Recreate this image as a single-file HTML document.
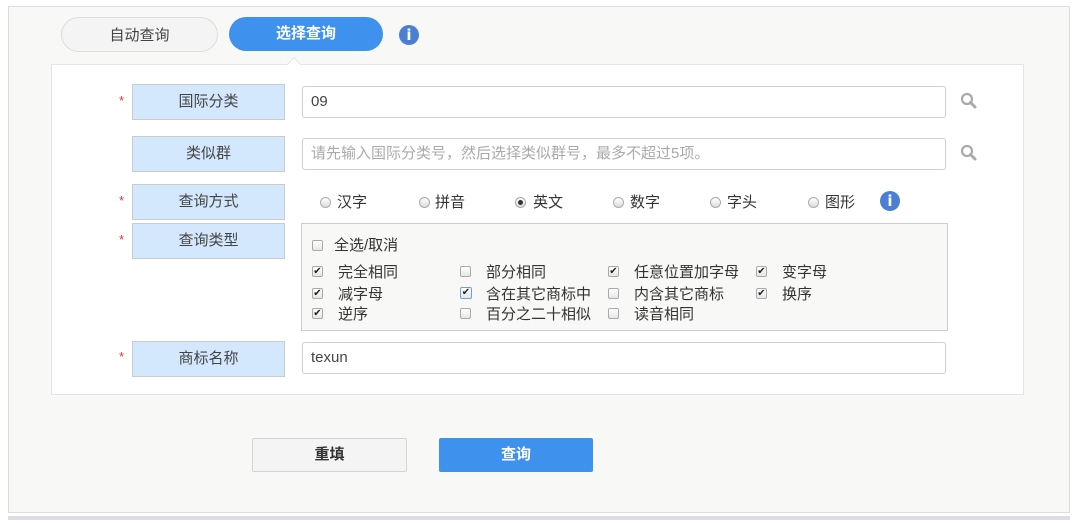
<!DOCTYPE html>
<html><head><meta charset="utf-8"><style>
*{margin:0;padding:0;box-sizing:border-box}
body{width:1080px;height:523px;background:#fff;position:relative;overflow:hidden;font-family:"Liberation Sans","Noto Sans CJK SC",sans-serif;font-size:15px;color:#333}
.a{position:absolute}
.outer{left:8px;top:6px;width:1062px;height:507px;background:#f8f8f6;border:1px solid #ddd}
.inner{left:51px;top:64px;width:973px;height:331px;background:#fff;border:1px solid #e4e4e4}
.tab{height:35px;border-radius:18px;text-align:center;line-height:35px;font-size:15px}
.lbl{left:132px;width:153px;height:36px;background:#d4e8fd;border:1px solid #c8ccd0;text-align:center;line-height:34px;color:#444}
.star{left:119px;color:#e33;font-size:13px}
.inp{left:302px;width:644px;height:32px;border:1px solid #d0d0d0;border-radius:3px;background:#fff;line-height:30px;padding-left:8px;color:#444}
.info{width:20px;height:20px;border-radius:50%;background:#4a7fd4;color:#fff;text-align:center;font:bold 15px/20px "DejaVu Sans",sans-serif}
.rad{width:11px;height:11px;border-radius:50%;border:1px solid #aaa;background:linear-gradient(#fff,#ddd)}
.rad.on::after{content:"";position:absolute;left:2px;top:2px;width:5px;height:5px;border-radius:50%;background:#333}
.cb{width:11px;height:11px;border:1px solid #aaa;border-radius:2px;background:linear-gradient(#fff,#e6e6e6);font-size:10px;line-height:9px;text-align:center;color:#222}
.t{font-size:15px;line-height:17px;color:#333}
</style></head><body>
<div class="a outer"></div>
<div class="a" style="left:8px;top:516px;width:1062px;height:4px;background:#dcdde8"></div>
<div class="a tab" style="left:61px;top:17px;width:157px;background:#f4f4f4;border:1px solid #ddd;color:#444">自动查询</div>
<div class="a tab" style="left:229px;top:17px;width:154px;height:34px;background:#3e92ee;color:#fff;font-weight:bold;line-height:34px">选择查询</div>
<div class="a info" style="left:399px;top:25px">i</div>
<div class="a inner"></div>
<div class="a" style="left:289px;top:59px;width:10px;height:10px;background:#fff;border-left:1px solid #e4e4e4;border-top:1px solid #e4e4e4;transform:rotate(45deg)"></div>

<div class="a star" style="top:93px">*</div>
<div class="a lbl" style="top:84px">国际分类</div>
<div class="a inp" style="top:86px">09</div>
<div class="a star" style="top:193px">*</div>
<div class="a lbl" style="top:136px">类似群</div>
<div class="a inp" style="top:138px;color:#aaa">请先输入国际分类号，然后选择类似群号，最多不超过5项。</div>
<div class="a lbl" style="top:184px">查询方式</div>
<div class="a star" style="top:232px">*</div>
<div class="a lbl" style="top:223px">查询类型</div>
<div class="a star" style="top:349px">*</div>
<div class="a lbl" style="top:341px">商标名称</div>
<div class="a inp" style="top:342px">texun</div>

<svg class="a" style="left:960px;top:92px" width="18" height="18"><circle cx="7" cy="7" r="5" fill="none" stroke="#aaa" stroke-width="2.2"/><line x1="10.5" y1="10.5" x2="15" y2="15" stroke="#aaa" stroke-width="3" stroke-linecap="round"/></svg>
<svg class="a" style="left:960px;top:144px" width="18" height="18"><circle cx="7" cy="7" r="5" fill="none" stroke="#aaa" stroke-width="2.2"/><line x1="10.5" y1="10.5" x2="15" y2="15" stroke="#aaa" stroke-width="3" stroke-linecap="round"/></svg>

<div class="a rad" style="left:320px;top:197px"></div><div class="a t" style="left:337px;top:194px">汉字</div>
<div class="a rad" style="left:419px;top:197px"></div><div class="a t" style="left:435px;top:194px">拼音</div>
<div class="a rad on" style="left:515px;top:197px"></div><div class="a t" style="left:533px;top:194px">英文</div>
<div class="a rad" style="left:613px;top:197px"></div><div class="a t" style="left:630px;top:194px">数字</div>
<div class="a rad" style="left:710px;top:197px"></div><div class="a t" style="left:727px;top:194px">字头</div>
<div class="a rad" style="left:808px;top:197px"></div><div class="a t" style="left:825px;top:194px">图形</div>
<div class="a info" style="left:880px;top:191px">i</div>

<div class="a" style="left:301px;top:223px;width:647px;height:108px;background:#f8f8f6;border:1px solid #ccc"></div>
<div class="a cb" style="left:312px;top:240px"></div><div class="a t" style="left:334px;top:237px">全选/取消</div>

<div class="a cb" style="left:312px;top:266px">✔</div><div class="a t" style="left:338px;top:264px">完全相同</div>
<div class="a cb" style="left:460px;top:266px"></div><div class="a t" style="left:486px;top:264px">部分相同</div>
<div class="a cb" style="left:608px;top:266px">✔</div><div class="a t" style="left:634px;top:264px">任意位置加字母</div>
<div class="a cb" style="left:756px;top:266px">✔</div><div class="a t" style="left:782px;top:264px">变字母</div>

<div class="a cb" style="left:312px;top:288px">✔</div><div class="a t" style="left:338px;top:286px">减字母</div>
<div class="a cb" style="left:460px;top:287px;border-color:#6aa0e0;width:12px;height:12px">✔</div><div class="a t" style="left:486px;top:286px">含在其它商标中</div>
<div class="a cb" style="left:608px;top:288px"></div><div class="a t" style="left:634px;top:286px">内含其它商标</div>
<div class="a cb" style="left:756px;top:288px">✔</div><div class="a t" style="left:782px;top:286px">换序</div>

<div class="a cb" style="left:312px;top:308px">✔</div><div class="a t" style="left:338px;top:306px">逆序</div>
<div class="a cb" style="left:460px;top:308px"></div><div class="a t" style="left:486px;top:306px">百分之二十相似</div>
<div class="a cb" style="left:608px;top:308px"></div><div class="a t" style="left:634px;top:306px">读音相同</div>

<div class="a" style="left:252px;top:438px;width:155px;height:34px;background:#f4f4f4;border:1px solid #d4d4d4;border-radius:2px;text-align:center;line-height:32px;font-weight:bold;color:#333">重填</div>
<div class="a" style="left:439px;top:438px;width:154px;height:34px;background:#3e92ee;border-radius:2px;text-align:center;line-height:34px;font-weight:bold;color:#fff">查询</div>
</body></html>
